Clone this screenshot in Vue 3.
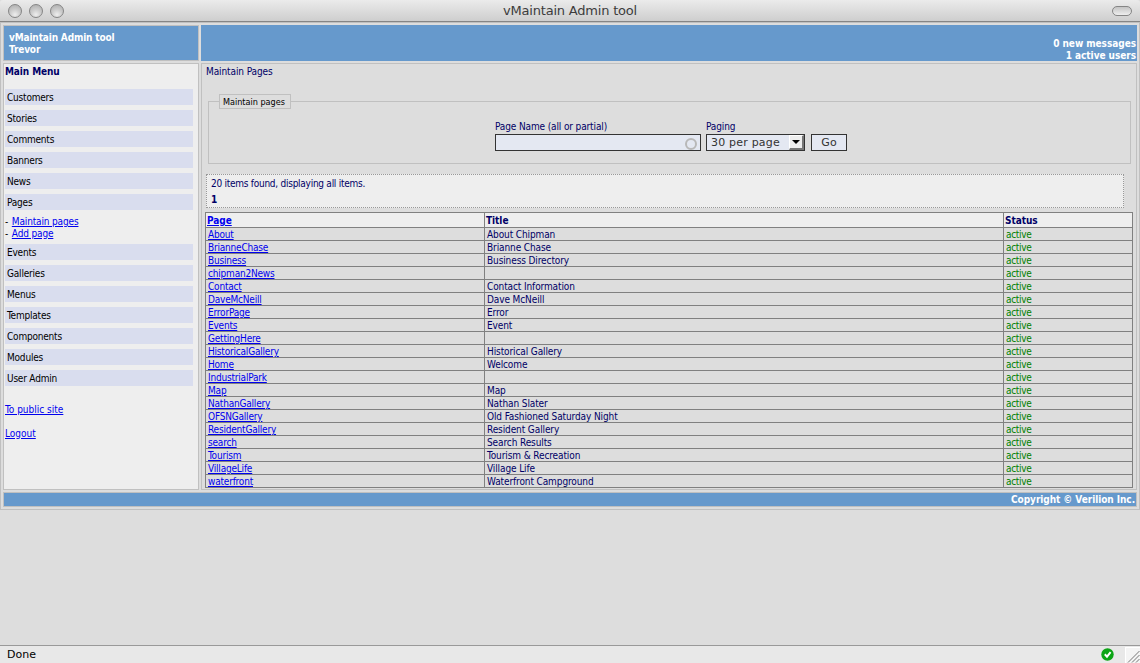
<script setup>
const menuTop = ['Customers', 'Stories', 'Comments', 'Banners', 'News', 'Pages']
const menuBottom = ['Events', 'Galleries', 'Menus', 'Templates', 'Components', 'Modules', 'User Admin']
const pages = [
  ['About', 'About Chipman'],
  ['BrianneChase', 'Brianne Chase'],
  ['Business', 'Business Directory'],
  ['chipman2News', ''],
  ['Contact', 'Contact Information'],
  ['DaveMcNeill', 'Dave McNeill'],
  ['ErrorPage', 'Error'],
  ['Events', 'Event'],
  ['GettingHere', ''],
  ['HistoricalGallery', 'Historical Gallery'],
  ['Home', 'Welcome'],
  ['IndustrialPark', ''],
  ['Map', 'Map'],
  ['NathanGallery', 'Nathan Slater'],
  ['OFSNGallery', 'Old Fashioned Saturday Night'],
  ['ResidentGallery', 'Resident Gallery'],
  ['search', 'Search Results'],
  ['Tourism', 'Tourism & Recreation'],
  ['VillageLife', 'Village Life'],
  ['waterfront', 'Waterfront Campground'],
]
</script>

<template>
  <div class="window">
    <header class="titlebar">
      <div class="lights"><i></i><i></i><i></i></div>
      <span class="wtitle">vMaintain Admin tool</span>
      <b class="pill"></b>
    </header>

    <div class="layout">
      <div class="brand">vMaintain Admin tool<br />Trevor</div>
      <div class="counts"><span>0 new messages</span><br /><span>1 active users</span></div>

      <nav class="side">
        <div class="heading">Main Menu</div>
        <div v-for="m in menuTop" :key="m" class="item">{{ m }}</div>
        <div class="subs">
          <div>- <a>Maintain pages</a></div>
          <div>- <a>Add page</a></div>
        </div>
        <div v-for="m in menuBottom" :key="m" class="item">{{ m }}</div>
        <div class="links"><a>To public site</a><a>Logout</a></div>
      </nav>

      <main class="main">
        <div class="crumb">Maintain Pages</div>
        <section class="group">
          <span class="legend">Maintain pages</span>
          <div class="form">
            <div class="field name">
              <label>Page Name (all or partial)</label>
              <div class="input"><i class="ring"></i></div>
            </div>
            <div class="field paging">
              <label>Paging</label>
              <div class="select"><span>30 per page</span><b class="drop"><svg width="8" height="4" viewBox="0 0 8 4"><path d="M0 0h8L4 4z" /></svg></b></div>
            </div>
            <div class="go">Go</div>
          </div>
        </section>
        <div class="found">
          <div>20 items found, displaying all items.</div>
          <strong>1</strong>
        </div>
        <table class="list">
          <colgroup><col class="c1" /><col class="c2" /><col class="c3" /></colgroup>
          <thead>
            <tr><th><a>Page</a></th><th>Title</th><th>Status</th></tr>
          </thead>
          <tbody>
            <tr v-for="p in pages" :key="p[0]">
              <td><a>{{ p[0] }}</a></td>
              <td class="title">{{ p[1] }}</td>
              <td class="active">active</td>
            </tr>
          </tbody>
        </table>
      </main>

      <footer class="copy">Copyright © Verilion Inc.</footer>
    </div>

    <div class="status">
      <span class="done">Done</span>
      <svg class="ok" width="13" height="13" viewBox="0 0 13 13">
        <circle cx="6.5" cy="6.5" r="6.2" fill="#0ca515" />
        <path d="M3.8 6.2l2.2 2.4 3.6-4.4" fill="none" stroke="#fff" stroke-width="2" />
      </svg>
      <svg class="grip" width="15" height="16" viewBox="0 0 15 16">
        <rect width="15" height="16" fill="#fff" />
        <path d="M1 16V1H15V16z" fill="#f4f4f4" />
        <path d="M3 15.5L14.5 4M7 15.5L14.5 8M11 15.5L14.5 12" stroke="#777" fill="none" />
      </svg>
    </div>
  </div>
</template>

<style>
body { margin: 0; overflow: hidden; background: #ddd; }
</style>

<style scoped>
.window {
  box-sizing: border-box; width: 1140px; height: 663px; display: flex; flex-direction: column;
  background: #ddd; color: #006; font: 10px/12px "DejaVu Sans Condensed", "DejaVu Sans", sans-serif;
  font-stretch: condensed; letter-spacing: -0.2px; white-space: nowrap;
}
.window * { box-sizing: border-box; }
a { color: #00e; text-decoration: underline; }
.titlebar {
  height: 22px; flex: none; display: flex; align-items: center; justify-content: space-between;
  padding: 0 8px; border-bottom: 1px solid #858585;
  background: linear-gradient(#ebebeb, #cecece); border-radius: 3px 3px 0 0;
}
.lights { display: flex; gap: 7px; width: 70px; }
.lights i {
  width: 14px; height: 14px; border-radius: 50%; border: 1px solid #858585;
  background: radial-gradient(circle at 50% 80%, #eee 0, #ccc 45%, #aaa 100%);
}
.wtitle { font: 13px/20px "DejaVu Sans", sans-serif; font-stretch: normal; color: #3c3c3c; letter-spacing: -0.2px; }
.pill { width: 20px; height: 10px; border: 1px solid #858585; border-radius: 5px; background: linear-gradient(#c4c4c4, #eee); margin-left: 50px; }
.layout {
  flex: none; height: 488px; border: 1px solid #c0c0c0; padding: 2px; display: grid;
  grid-template-columns: 196px 936px; grid-template-rows: 36px 427px 15px; gap: 2px;
}
.brand { background: #69c; border: 1px solid #c0c0c0; color: #fff; font-weight: bold; padding: 6px 5px; letter-spacing: -0.15px; }
.counts { background: #69c; color: #fff; font-weight: bold; text-align: right; padding: 13px 1px 0 0; letter-spacing: -0.05px; }
.side { border: 1px solid #c0c0c0; background: #eee; padding: 2px 5px 0 1px; color: #000; }
.heading { color: #006; font-weight: bold; height: 23px; letter-spacing: -0.1px; }
.item { height: 16px; margin-bottom: 5px; padding: 3px 2px 0; background: #d9ddee; }
.subs { margin: 6px 0 4px; letter-spacing: -0.15px; }
.subs a { margin-left: 1px; }
.links { display: flex; flex-direction: column; gap: 12px; padding-top: 13px; align-items: flex-start; letter-spacing: 0; }
.main { border: 1px solid #c0c0c0; padding: 2px 3px 0; }
.crumb { padding-left: 1px; height: 35px; letter-spacing: -0.1px; }
.group { margin: 0 2px 0 3px; height: 63px; border: 1px solid #c0c0c0; position: relative; }
.legend { position: absolute; left: 10px; top: -8px; width: 72px; height: 15px; font-size: 9px; line-height: 15px; padding-left: 3px; border: 1px solid #c0c0c0; background: #ddd; color: #000; letter-spacing: 0; }
.form { display: flex; padding: 19px 0 0 286px; }
.name { width: 206px; margin-right: 5px; }
.paging { width: 99px; margin-right: 6px; }
label { display: block; height: 13px; letter-spacing: -0.13px; }
.input, .select, .go { height: 17px; border: 1px solid #333; background: #e4e8f2; }
.input { display: flex; justify-content: flex-end; align-items: center; padding-right: 3px; }
.ring { width: 12px; height: 12px; border: 2px solid #b8b8b8; border-radius: 50%; position: relative; top: 1px; }
.select, .go { font: 11px/16px "DejaVu Sans", sans-serif; font-stretch: normal; color: #333; letter-spacing: 0.2px; }
.select { display: flex; justify-content: space-between; padding-left: 4px; }
.drop { width: 15px; height: 15px; background: #eee; border: 1px solid #fff; border-right: 2px solid #777; border-bottom: 2px solid #777; display: flex; align-items: center; justify-content: center; }
.go { width: 36px; text-align: center; margin-top: 13px; }
.found { width: 918px; height: 34px; margin: 10px 0 4px 1px; padding: 3px 4px; border: 1px dotted #999; background: #eee; letter-spacing: -0.26px; }
.found strong { display: block; margin-top: 4px; }
.list { width: 928px; table-layout: fixed; border-spacing: 0; border: solid #808080; border-width: 1px 0 0 1px; }
.c1 { width: 279px; }
.c2 { width: 519px; }
.c3 { width: 129px; }
th, td { height: 13px; padding: 1px 0 0 2px; line-height: 11px; border: solid #808080; border-width: 0 1px 1px 0; text-align: left; }
td { line-height: 11px; }
td a { display: inline-block; height: 11px; line-height: 12px; vertical-align: top; }
td.title, td.active { line-height: 11px; }
th { height: 15px; padding: 2px 0 0 1px; line-height: 12px; background: #eee; letter-spacing: -0.05px; }
.title { letter-spacing: -0.11px; }
.active { color: #008000; letter-spacing: -0.3px; }
.copy { grid-column: 1 / 3; background: #69c; border: 1px solid #c0c0c0; color: #fff; font-weight: bold; line-height: 13px; text-align: right; padding-right: 1px; letter-spacing: -0.06px; }
.status { margin-top: auto; height: 18px; flex: none; border-top: 1px solid #999; background: #e8e8e8; display: flex; align-items: center; }
.done { color: #000; font: 11px/16px "DejaVu Sans", sans-serif; font-stretch: normal; padding-left: 7px; letter-spacing: 0; margin-right: auto; }
.ok { margin-right: 11px; }
</style>
